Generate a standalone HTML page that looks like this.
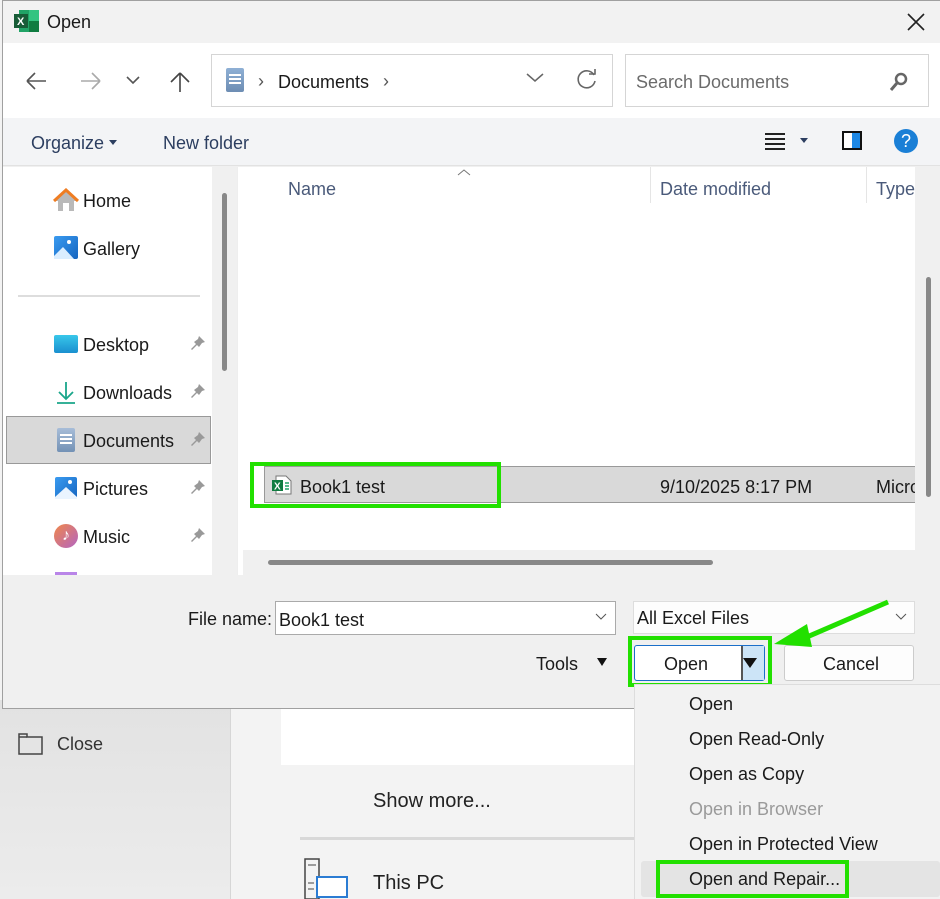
<!DOCTYPE html>
<html><head><meta charset="utf-8"><style>
*{margin:0;padding:0;box-sizing:border-box}
body{width:940px;height:899px;position:relative;overflow:hidden;background:#f3f3f3;font-family:"Liberation Sans",sans-serif;font-size:18px;color:#1a1a1a}
.a{position:absolute}
.t{position:absolute;white-space:nowrap;line-height:22px}
</style></head><body>
<!-- backstage bg -->
<div class="a" style="left:0;top:700px;width:231px;height:199px;background:linear-gradient(#e2e2e2,#ececec)"></div>
<div class="a" style="left:230px;top:700px;width:1px;height:199px;background:#d6d6d6"></div>
<svg class="a" style="left:18px;top:731px" width="26" height="24"><path d="M1 3h8v3h15v17H1z" fill="none" stroke="#444" stroke-width="1.5"/><path d="M1 6h8" stroke="#444" stroke-width="1.5"/></svg>
<div class="t" style="left:57px;top:733px;color:#333">Close</div>
<div class="a" style="left:281px;top:705px;width:354px;height:60px;background:#fff"></div>
<div class="t" style="left:373px;top:790px;font-size:20px;color:#222">Show more...</div>
<div class="a" style="left:300px;top:837px;width:335px;height:3px;background:#d8d8d8"></div>
<svg class="a" style="left:302px;top:857px" width="48" height="42"><rect x="3" y="2" width="14" height="40" fill="none" stroke="#444" stroke-width="1.5"/><path d="M6 8h8M6 26h6M6 32h6" stroke="#444"/><rect x="15" y="20" width="30" height="20" fill="#fff" stroke="#2b7cd3" stroke-width="2"/></svg>
<div class="t" style="left:373px;top:872px;font-size:20px;color:#222">This PC</div>

<!-- dialog -->
<div class="a" style="left:2px;top:0;width:938px;height:709px;background:#f0f0f0;border:1px solid #a0a0a0;border-right:none"></div>
<div class="a" style="left:3px;top:1px;width:937px;height:42px;background:#f2f2f2"></div>
<svg class="a" style="left:14px;top:10px" width="25" height="22"><rect x="5" y="0" width="20" height="22" fill="#21a366"/><rect x="15" y="0" width="10" height="11" fill="#33c481"/><rect x="15" y="11" width="10" height="11" fill="#107c41"/><rect x="0" y="4" width="14" height="14" fill="#185c37"/><text x="3" y="15" font-size="11" font-weight="bold" fill="#fff" font-family="Liberation Sans">X</text></svg>
<div class="t" style="left:47px;top:11px;font-size:18px">Open</div>
<svg class="a" style="left:906px;top:12px" width="20" height="20"><path d="M2 2L18 18M18 2L2 18" stroke="#222" stroke-width="1.6"/></svg>
<!-- nav -->
<div class="a" style="left:3px;top:43px;width:937px;height:75px;background:#fff"></div>
<svg class="a" style="left:24px;top:70px" width="180" height="24"><path d="M3 11H22M3 11L11 3M3 11L11 19" fill="none" stroke="#555" stroke-width="1.6"/><path d="M57 11H76M76 11L68 3M76 11L68 19" fill="none" stroke="#aaa" stroke-width="1.6"/><path d="M103 7L109 13L115 7" fill="none" stroke="#555" stroke-width="1.6"/><path d="M156 3V22M156 3L147 12M156 3L165 12" fill="none" stroke="#444" stroke-width="1.6"/></svg>
<div class="a" style="left:211px;top:54px;width:402px;height:53px;border:1px solid #d5d5d5;background:#fff"></div>
<div class="a" style="left:226px;top:68px;width:18px;height:24px;background:linear-gradient(#8fb0d5,#6d8db3);border-radius:2px"></div>
<div class="a" style="left:229px;top:74px;width:12px;height:2px;background:#fff;box-shadow:0 4px #fff,0 8px #fff"></div>
<div class="t" style="left:258px;top:70px;color:#555">›</div>
<div class="t" style="left:278px;top:71px">Documents</div>
<div class="t" style="left:383px;top:70px;color:#555">›</div>
<svg class="a" style="left:525px;top:72px" width="20" height="12"><path d="M2 2L10 9L18 2" fill="none" stroke="#666" stroke-width="1.5"/></svg>
<svg class="a" style="left:575px;top:68px" width="24" height="24"><path d="M19 7A8.5 8.5 0 1 0 20 13" fill="none" stroke="#666" stroke-width="1.6"/><path d="M14 6H20V1" fill="none" stroke="#666" stroke-width="1.6"/></svg>
<div class="a" style="left:625px;top:54px;width:304px;height:53px;border:1px solid #d5d5d5;background:#fff"></div>
<div class="t" style="left:636px;top:71px;color:#6b6b6b">Search Documents</div>
<svg class="a" style="left:889px;top:72px" width="20" height="20"><circle cx="12" cy="7" r="5" fill="none" stroke="#666" stroke-width="2.5"/><path d="M8 11L2 18" stroke="#666" stroke-width="3"/></svg>
<!-- toolbar -->
<div class="a" style="left:3px;top:118px;width:937px;height:48px;background:#f3f4f6;border-bottom:1px solid #e2e2e2"></div>
<div class="t" style="left:31px;top:132px;color:#2c3e60">Organize</div>
<div class="a" style="left:109px;top:140px;border:4px solid transparent;border-top:5px solid #2c3e60"></div>
<div class="t" style="left:163px;top:132px;color:#2c3e60">New folder</div>
<div class="a" style="left:765px;top:133px;width:20px;height:2px;background:#222;box-shadow:0 5px #222,0 10px #222,0 15px #222"></div>
<div class="a" style="left:800px;top:138px;border:4px solid transparent;border-top:5px solid #2c3e60"></div>
<div class="a" style="left:842px;top:131px;width:20px;height:19px;border:2px solid #111;background:linear-gradient(90deg,#fff 50%,#1e88e5 50%)"></div>
<div class="a" style="left:894px;top:129px;width:24px;height:24px;border-radius:50%;background:#1a7fd6;color:#fff;font-size:18px;text-align:center;line-height:24px">?</div>
<!-- left pane -->
<div class="a" style="left:3px;top:167px;width:209px;height:408px;background:#fff"></div>
<div class="a" style="left:212px;top:167px;width:25px;height:408px;background:#f0f0f0"></div>
<div class="a" style="left:222px;top:193px;width:5px;height:178px;background:#888;border-radius:3px"></div>
<div class="a" style="left:237px;top:167px;width:6px;height:408px;background:#fff;border-left:1px solid #eee"></div>
<div class="a" style="left:18px;top:295px;width:182px;height:2px;background:#ddd"></div>
<svg class="a" style="left:53px;top:188px" width="26" height="24"><path d="M13 2L1 13H5V23H21V13H25Z" fill="#b9b9b9"/><path d="M1 13L13 2L25 13" fill="none" stroke="#ef7d22" stroke-width="3"/><rect x="10" y="15" width="6" height="8" fill="#fff"/></svg>
<div class="t" style="left:83px;top:190px">Home</div>
<div class="a" style="left:54px;top:236px;width:24px;height:23px;background:linear-gradient(135deg,#3a9bf0,#1565c0);border-radius:2px"></div>
<svg class="a" style="left:54px;top:236px" width="24" height="23"><circle cx="15" cy="6" r="2" fill="#fff"/><path d="M0 20L9 11L20 23H0Z" fill="#dbeeff"/></svg>
<div class="t" style="left:83px;top:238px">Gallery</div>
<div class="a" style="left:54px;top:335px;width:24px;height:18px;background:linear-gradient(#38c7ea,#1a8fcf);border-radius:2px"></div>
<div class="t" style="left:83px;top:334px">Desktop</div>
<svg class="a" style="left:56px;top:381px" width="20" height="24"><path d="M10 1V18M3 11L10 18L17 11M1 22H19" fill="none" stroke="#1aa68a" stroke-width="1.8"/></svg>
<div class="t" style="left:83px;top:382px">Downloads</div>
<div class="a" style="left:6px;top:416px;width:205px;height:48px;background:#d9d9d9;border:1px solid #999"></div>
<div class="a" style="left:57px;top:428px;width:18px;height:24px;background:linear-gradient(#a7bdd8,#7391b5);border-radius:2px"></div>
<div class="a" style="left:60px;top:434px;width:12px;height:2px;background:#fff;box-shadow:0 4px #fff,0 8px #fff"></div>
<div class="t" style="left:83px;top:430px">Documents</div>
<div class="a" style="left:55px;top:477px;width:22px;height:22px;background:linear-gradient(135deg,#3a9bf0,#1565c0);border-radius:2px"></div>
<svg class="a" style="left:55px;top:477px" width="22" height="22"><circle cx="15" cy="5" r="2" fill="#fff"/><path d="M0 20L11 10L22 20V22H0Z" fill="#eaf4ff"/></svg>
<div class="t" style="left:83px;top:478px">Pictures</div>
<div class="a" style="left:54px;top:524px;width:24px;height:24px;border-radius:50%;background:linear-gradient(135deg,#f0874a,#b365c2)"></div>
<div class="t" style="left:62px;top:525px;color:#fff;font-size:16px">♪</div>
<div class="t" style="left:83px;top:526px">Music</div>
<div class="a" style="left:55px;top:572px;width:22px;height:3px;background:#b985e8"></div>
<svg class="a" style="left:190px;top:334px" width="18" height="220"><g fill="#999"><path d="M9 2l6 6-3 1-3 4-2-2-5 5 -1-1 5-5-2-2 4-3z"/><path transform="translate(0,48)" d="M9 2l6 6-3 1-3 4-2-2-5 5 -1-1 5-5-2-2 4-3z"/><path transform="translate(0,96)" d="M9 2l6 6-3 1-3 4-2-2-5 5 -1-1 5-5-2-2 4-3z"/><path transform="translate(0,144)" d="M9 2l6 6-3 1-3 4-2-2-5 5 -1-1 5-5-2-2 4-3z"/><path transform="translate(0,192)" d="M9 2l6 6-3 1-3 4-2-2-5 5 -1-1 5-5-2-2 4-3z"/></g></svg>
<!-- file list -->
<div class="a" style="left:243px;top:167px;width:672px;height:383px;background:#fff"></div>
<svg class="a" style="left:456px;top:168px" width="16" height="8"><path d="M2 7L8 2L14 7" fill="none" stroke="#777" stroke-width="1"/></svg>
<div class="t" style="left:288px;top:178px;color:#4a5a7a">Name</div>
<div class="a" style="left:650px;top:167px;width:1px;height:36px;background:#e5e5e5"></div>
<div class="t" style="left:660px;top:178px;color:#4a5a7a">Date modified</div>
<div class="a" style="left:866px;top:167px;width:1px;height:36px;background:#e5e5e5"></div>
<div class="t" style="left:876px;top:178px;color:#4a5a7a">Type</div>
<div class="a" style="left:915px;top:167px;width:25px;height:408px;background:#f0f0f0"></div>
<div class="a" style="left:926px;top:277px;width:5px;height:220px;background:#888;border-radius:3px"></div>
<div class="a" style="left:264px;top:466px;width:651px;height:37px;background:#d9d9d9;border-top:1px solid #999;border-bottom:1px solid #999"></div>
<div class="a" style="left:264px;top:467px;width:1px;height:35px;background:#999"></div>
<svg class="a" style="left:272px;top:475px" width="20" height="20"><path d="M4 1H14L19 6V19H4Z" fill="#fff" stroke="#777"/><rect x="0" y="5" width="11" height="11" fill="#107c41"/><text x="2" y="14.5" font-size="10" font-weight="bold" fill="#fff" font-family="Liberation Sans">X</text><path d="M13 8h4M13 11h4M13 14h4" stroke="#21a366" stroke-width="1.5"/></svg>
<div class="t" style="left:300px;top:476px">Book1 test</div>
<div class="t" style="left:660px;top:476px">9/10/2025 8:17 PM</div>
<div class="t" style="left:876px;top:476px;width:39px;overflow:hidden">Microsoft</div>
<div class="a" style="left:250px;top:462px;width:251px;height:46px;border:4px solid #22e000"></div>
<div class="a" style="left:243px;top:550px;width:672px;height:25px;background:#f0f0f0"></div>
<div class="a" style="left:268px;top:560px;width:445px;height:5px;background:#888;border-radius:3px"></div>
<!-- bottom -->
<div class="t" style="left:188px;top:608px">File name:</div>
<div class="a" style="left:275px;top:601px;width:341px;height:34px;background:#fff;border:1px solid #aaa"></div>
<div class="t" style="left:279px;top:609px">Book1 test</div>
<svg class="a" style="left:595px;top:613px" width="12" height="8"><path d="M1 1L6 6L11 1" fill="none" stroke="#555"/></svg>
<div class="a" style="left:633px;top:601px;width:282px;height:33px;background:#fdfdfd;border:1px solid #ddd"></div>
<div class="t" style="left:637px;top:607px">All Excel Files</div>
<svg class="a" style="left:895px;top:613px" width="12" height="8"><path d="M1 1L6 6L11 1" fill="none" stroke="#555"/></svg>
<div class="t" style="left:536px;top:653px">Tools</div>
<div class="a" style="left:597px;top:658px;border:5px solid transparent;border-top:8px solid #111"></div>
<div class="a" style="left:634px;top:645px;width:131px;height:36px;background:#fff;border:1px solid #1a6fc9;border-radius:3px"></div>
<div class="a" style="left:741px;top:646px;width:23px;height:34px;background:#cce4f7;border-left:2px solid #555"></div>
<div class="a" style="left:743px;top:658px;border:7px solid transparent;border-top:10px solid #111"></div>
<div class="t" style="left:664px;top:653px">Open</div>
<div class="a" style="left:628px;top:636px;width:144px;height:51px;border:4px solid #22e000"></div>
<div class="a" style="left:784px;top:645px;width:130px;height:36px;background:#fdfdfd;border:1px solid #ccc;border-radius:3px"></div>
<div class="t" style="left:823px;top:653px">Cancel</div>
<!-- dropdown -->
<div class="a" style="left:634px;top:684px;width:306px;height:215px;background:#f2f2f2;border-left:1px solid #ddd;border-top:1px solid #ddd"></div>
<div class="a" style="left:641px;top:861px;width:299px;height:36px;background:#e4e4e4;border-radius:3px"></div>
<div class="t" style="left:689px;top:693px">Open</div>
<div class="t" style="left:689px;top:728px">Open Read-Only</div>
<div class="t" style="left:689px;top:763px">Open as Copy</div>
<div class="t" style="left:689px;top:798px;color:#9a9a9a">Open in Browser</div>
<div class="t" style="left:689px;top:833px">Open in Protected View</div>
<div class="t" style="left:689px;top:868px">Open and Repair...</div>
<div class="a" style="left:656px;top:860px;width:193px;height:38px;border:4px solid #22e000"></div>
<!-- arrow -->
<svg class="a" style="left:760px;top:590px" width="140" height="70"><path d="M128 12L40 50" stroke="#22e000" stroke-width="5"/><path d="M14 54L47 34L52 57Z" fill="#22e000"/></svg>
</body></html>
